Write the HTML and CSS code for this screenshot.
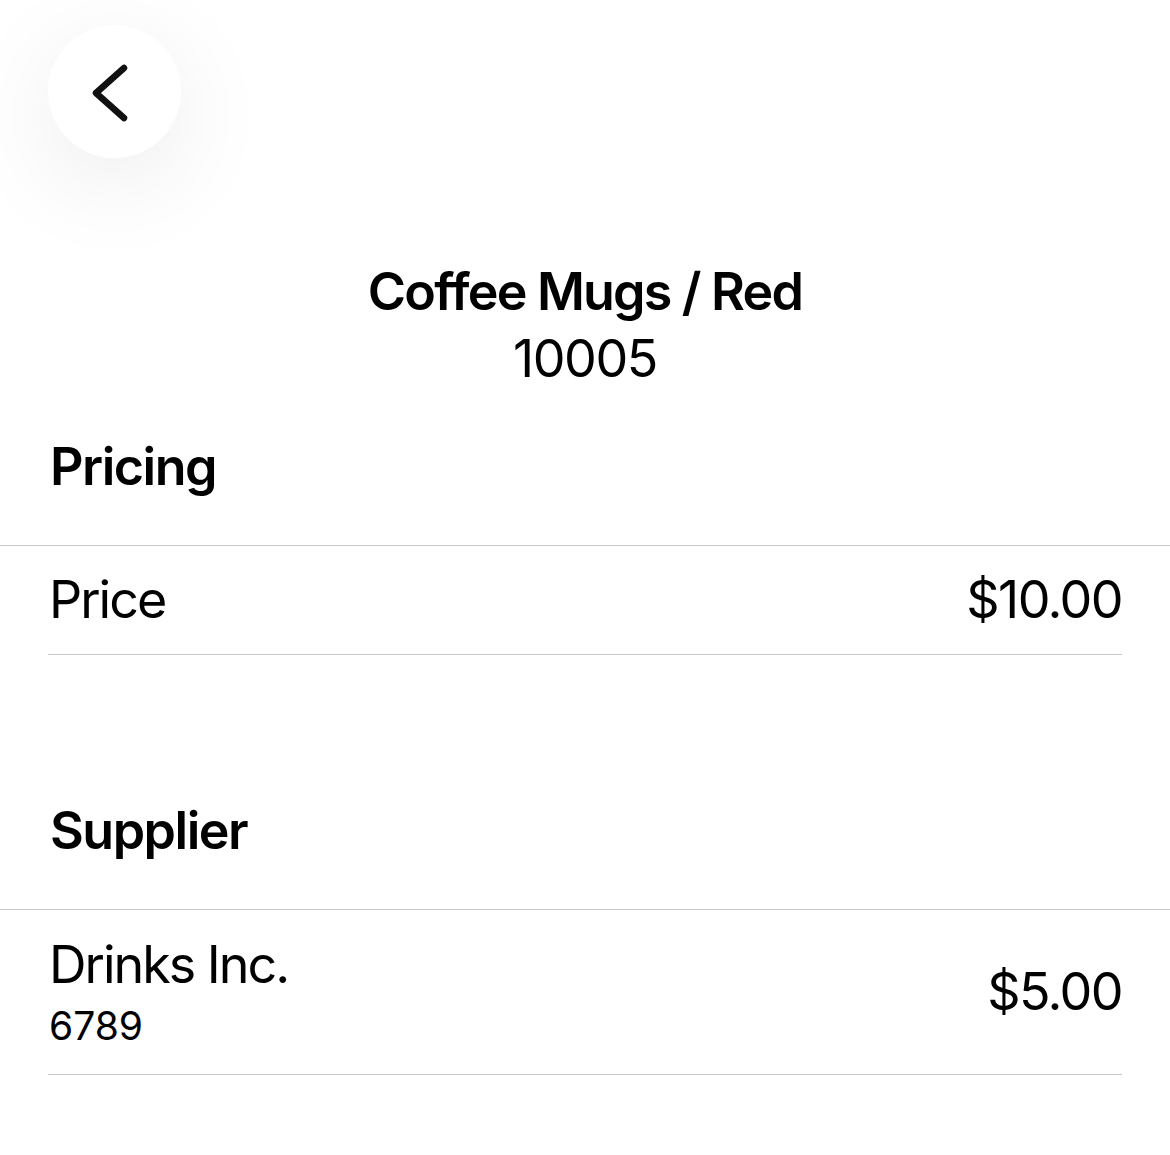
FILE: index.html
```html
<!DOCTYPE html>
<html>
<head>
<meta charset="utf-8">
<link rel="stylesheet" href="styles.css">
</head>
<body>
<div class="page">
  <header class="top">
    <button class="back" aria-label="Back">
      <svg width="132" height="132" viewBox="0 0 132 132"><path d="M75 42 L47 67 L75 92" fill="none" stroke="#111" stroke-width="6.5" stroke-linecap="round" stroke-linejoin="round"/></svg>
    </button>
  </header>
  <div class="title-block">
    <h1 class="title">Coffee Mugs / Red</h1>
    <div class="sku">10005</div>
  </div>
  <section class="section section-pricing">
    <h2 class="section-title">Pricing</h2>
    <div class="list">
      <div class="row">
        <div class="row-inner">
          <span class="label">Price</span>
          <span class="value">$10.00</span>
        </div>
      </div>
    </div>
  </section>
  <section class="section section-supplier">
    <h2 class="section-title">Supplier</h2>
    <div class="list">
      <div class="row">
        <div class="row-inner row-tall">
          <div class="stack">
            <span class="label">Drinks Inc.</span>
            <span class="sub">6789</span>
          </div>
          <span class="value">$5.00</span>
        </div>
      </div>
    </div>
  </section>
</div>
</body>
</html>
```

FILE: styles.css
```css
html, body {
  margin: 0;
  padding: 0;
  background: #fff;
}
body {
  font-family: Inter, "Noto Sans", "Liberation Sans", sans-serif;
  color: #000;
  font-variant-ligatures: none;
}
.page {
  width: 1170px;
}
.top {
  padding: 25px 0 0 48px;
  height: 133px;
}
.back {
  width: 133px;
  height: 133px;
  border-radius: 50%;
  border: none;
  padding: 0;
  background: #fff;
  box-shadow: 0 24px 100px rgba(0, 0, 0, 0.08);
  display: flex;
  align-items: center;
  justify-content: center;
}
.back svg {
  display: block;
}
.title-block {
  margin-top: 100px;
  text-align: center;
}
.title {
  margin: 0;
  font-size: 52px;
  font-weight: 600;
  line-height: 67px;
  letter-spacing: -1.8px;
}
.sku {
  font-size: 52px;
  font-weight: 400;
  line-height: 67px;
  letter-spacing: -1.4px;
}
.section-pricing {
  margin-top: 44px;
}
.section-supplier {
  margin-top: 145px;
}
.section-title {
  margin: 0 0 47px 50px;
  font-size: 52px;
  font-weight: 600;
  line-height: 62px;
  letter-spacing: -1.5px;
}
.list {
  border-top: 1px solid #c8c8c8;
}
.row {
  padding: 0 48px;
}
.row-inner {
  height: 109px;
  border-bottom: 1px solid #c8c8c8;
  display: flex;
  align-items: center;
  justify-content: space-between;
  padding: 0 0 0 1px;
  box-sizing: border-box;
}
.row-tall {
  height: 165px;
}
.label {
  font-size: 52px;
  line-height: 62px;
  letter-spacing: -2px;
}
.value {
  font-size: 52px;
  line-height: 62px;
  letter-spacing: -1.6px;
}
.stack {
  display: flex;
  flex-direction: column;
  padding-top: 3px;
}
.sub {
  margin-top: 3px;
  font-size: 39px;
  line-height: 54px;
  letter-spacing: 0;
}
```
